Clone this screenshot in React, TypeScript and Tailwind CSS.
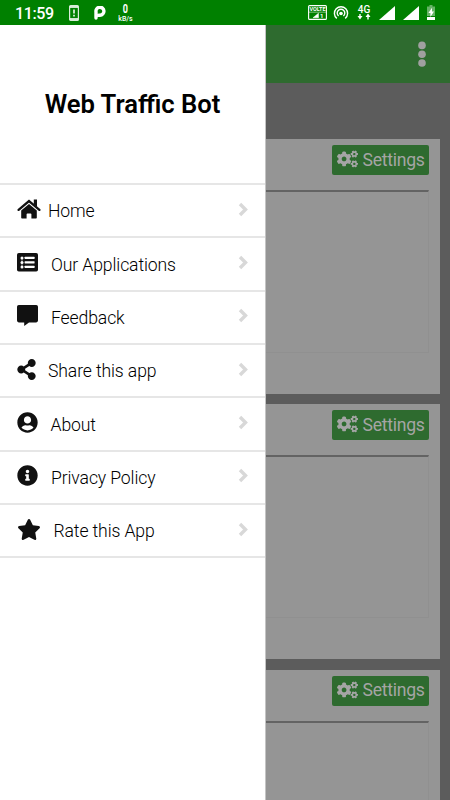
import React from 'react';
import { FaShareAlt, FaUserCircle, FaInfoCircle, FaStar, FaCogs } from 'react-icons/fa';

interface MenuItem {
  label: string;
  icon: React.ReactNode;
  gap: string;
}

const HomeIcon = () => (
  <svg width="24" height="21" viewBox="0 0 24 21" fill="currentColor">
    <path d="M1.6 10.9L12 2.1l10.4 8.8" fill="none" stroke="currentColor" strokeWidth="2.3" strokeLinecap="round" />
    <path d="M16.8 0.6h3.2v7.4l-3.2-2.5z" />
    <path d="M4.2 11.6L12 5.1l7.8 6.5v7.2a.8.8 0 0 1-.8.8h-4.6v-4.4a.8.8 0 0 0-.8-.8h-3.2a.8.8 0 0 0-.8.8v4.4H5a.8.8 0 0 1-.8-.8z" />
  </svg>
);

const ListIcon = () => (
  <svg width="21" height="21" viewBox="0 0 21 21">
    <rect x="0" y="1" width="21" height="18.6" rx="1.8" fill="currentColor" />
    <g fill="white">
      <circle cx="5" cy="5.9" r="1.5" />
      <circle cx="5" cy="10.4" r="1.5" />
      <circle cx="5" cy="14.9" r="1.5" />
      <rect x="7.6" y="4.8" width="10" height="2.2" rx="0.4" />
      <rect x="7.6" y="9.3" width="10" height="2.2" rx="0.4" />
      <rect x="7.6" y="13.8" width="10" height="2.2" rx="0.4" />
      <rect x="4.6" y="5" width="0.8" height="10" opacity="0.6" />
    </g>
  </svg>
);

const CommentIcon = () => (
  <svg width="21" height="21" viewBox="0 0 21 21" fill="currentColor">
    <path d="M1.8 0h17.4A1.8 1.8 0 0 1 21 1.8v13.8a1.8 1.8 0 0 1-1.8 1.8H12L7.2 21v-3.6H1.8A1.8 1.8 0 0 1 0 15.6V1.8A1.8 1.8 0 0 1 1.8 0z" />
  </svg>
);

const MENU: MenuItem[] = [
  { label: 'Home', icon: <HomeIcon />, gap: 'ml-[7px]' },
  { label: 'Our Applications', icon: <ListIcon />, gap: 'ml-[13px]' },
  { label: 'Feedback', icon: <CommentIcon />, gap: 'ml-[13px]' },
  { label: 'Share this app', icon: <FaShareAlt className="w-[19px] h-[21px]" />, gap: 'ml-[12px]' },
  { label: 'About', icon: <FaUserCircle className="w-[21px] h-[21px]" />, gap: 'ml-[12.5px]' },
  { label: 'Privacy Policy', icon: <FaInfoCircle className="w-[21px] h-[21px]" />, gap: 'ml-[13px]' },
  { label: 'Rate this App', icon: <FaStar className="w-[24px] h-[21px]" />, gap: 'ml-[12.5px]' },
];

const StatusBar = () => (
  <div className="h-[25px] shrink-0 bg-[#008000] text-white flex items-center pl-[15px] pr-[14px]">
    <span className="text-[16px] leading-none font-medium tracking-[-0.4px] mt-[3px] w-[54px]">11:59</span>

    {/* phone alert */}
    <svg width="10" height="16" viewBox="0 0 10 16" className="shrink-0">
      <rect x="0.6" y="0.6" width="8.8" height="14.8" rx="1" fill="none" stroke="white" strokeOpacity="0.85" strokeWidth="1.2" />
      <path d="M1 2h8M1 14h8" stroke="white" strokeWidth="2" opacity="0.8" />
      <path d="M5 4.5v4M5 9.8v1.7" stroke="white" strokeWidth="1.5" />
    </svg>

    {/* P app logo */}
    <svg width="12" height="14" viewBox="0 0 12 14" className="ml-[15px] mt-[1px] shrink-0">
      <path d="M2 12V6A4 4 0 1 1 6 9.2H4.7" fill="none" stroke="white" strokeWidth="3.4" strokeLinecap="round" />
    </svg>

    <div className="ml-[12px] w-[15px] flex flex-col items-center leading-none mt-[1px]">
      <span className="text-[12px] leading-[11px] font-bold scale-x-75">0</span>
      <span className="text-[7px] leading-[8px] font-medium">kB/s</span>
    </div>

    <div className="flex-1" />

    {/* volte box */}
    <svg width="19" height="15" viewBox="0 0 19 15" className="shrink-0">
      <rect x="0.6" y="0.6" width="17.8" height="13.8" rx="1" fill="none" stroke="white" strokeWidth="1.1" />
      <path d="M1 7.2h17M5 12.7l5.5-4.5v4.5z" stroke="white" strokeWidth="0.5" fill="white" />
      <text x="9.5" y="6" fontSize="5.5" fontWeight="700" textAnchor="middle" fill="white">VOLTE</text>
      <text x="12" y="13" fontSize="6" fontWeight="700" fill="white">1</text>
    </svg>

    {/* hotspot */}
    <svg width="16" height="15" viewBox="0 0 16 15" className="ml-[6px] shrink-0">
      <g fill="none" stroke="white" strokeWidth="1.4">
        <path d="M3.8 13.4A6.6 6.6 0 1 1 12.2 13.4" />
        <path d="M5.6 11A3.8 3.8 0 1 1 10.4 11" />
      </g>
      <circle cx="8" cy="8.5" r="1.8" fill="white" />
    </svg>

    {/* 4G with data arrows */}
    <svg width="14" height="15" viewBox="0 0 14 15" className="ml-[8px] shrink-0">
      <text x="7" y="7.5" fontSize="10" fontWeight="500" textAnchor="middle" fill="white">4G</text>
      <path d="M0.5 11h1.8V9h1.4v2H5.5L3 14.5zM8.5 12L11 8.5l2.5 3.5h-1.8v2.5h-1.4V12z" fill="white" />
    </svg>

    <svg width="16" height="14" viewBox="0 0 16 14" className="ml-[8px] shrink-0">
      <path d="M0 14L16 0v14z" fill="white" />
    </svg>
    <svg width="16" height="14" viewBox="0 0 16 14" className="ml-[8px] shrink-0">
      <path d="M0 14L16 0v14z" fill="white" />
    </svg>

    {/* charging battery */}
    <svg width="8" height="15" viewBox="0 0 8 15" className="ml-[8px] mr-px shrink-0">
      <path d="M0 1.5h2.5V0h3v1.5H8V11H0z" fill="white" opacity="0.4" />
      <path d="M0 12h8v3H0z" fill="white" />
      <path d="M5 2.8L1.4 8h2v4L7 6.6H5z" fill="white" />
    </svg>
  </div>
);

const Card = () => (
  <div className="h-[255px] shrink-0 bg-[#959595] mx-[10px] px-[11px] pt-[6px]">
    <div className="flex justify-end">
      <button className="w-[97px] h-[30px] bg-[#2e6b2f] text-[#a5a5a5] rounded-[2px] flex items-center pl-[5px]">
        <FaCogs className="w-[21px] h-[18px] -mt-[2px] shrink-0" />
        <span className="ml-[4.5px] mt-[1px] text-[17.6px] tracking-[-0.27px] leading-none">Settings</span>
      </button>
    </div>
    <div className="mt-[15px] h-[163px] border border-[#909090] border-t-2 border-t-[#636363]" />
  </div>
);

const Drawer = () => (
  <aside className="absolute left-0 top-[25px] bottom-0 w-[266px] bg-white border-r border-[#c4c4c4]">
    <div className="h-[158px] flex items-center justify-center">
      <h1 className="mt-[2px] text-[25.6px] leading-none font-semibold text-black">Web Traffic Bot</h1>
    </div>
    <ul className="border-t-2 border-[#e6e6e6]">
      {MENU.map(item => (
        <li key={item.label} className="h-[53.33px] border-b-2 border-[#e6e6e6] pl-[17px] pr-[17px] flex items-center text-[#111]">
          <span className="shrink-0 -mt-[3px]">{item.icon}</span>
          <span className={`${item.gap} mt-[3px] text-[17.6px] tracking-[-0.12px] leading-none font-light text-black`}>{item.label}</span>
          <svg width="10" height="15" viewBox="0 0 10 15" className="ml-auto -mt-[3px] text-[#d8d8d8]">
            <path d="M2 2l5.5 5.5L2 13" fill="none" stroke="currentColor" strokeWidth="3.4" />
          </svg>
        </li>
      ))}
    </ul>
  </aside>
);

export default function App() {
  return (
    <div className="relative w-[450px] h-[800px] overflow-hidden bg-[#5c5c5c] flex flex-col font-[Roboto,sans-serif]">
      <StatusBar />
      <header className="h-[58px] shrink-0 bg-[#2e6b2f] flex items-center justify-end pr-[24px]">
        <svg width="8" height="26" viewBox="0 0 8 26" fill="#a0a0a0">
          <circle cx="4" cy="4.4" r="3.8" />
          <circle cx="4" cy="13.2" r="3.8" />
          <circle cx="4" cy="22" r="3.8" />
        </svg>
      </header>
      <main className="flex flex-col gap-[10.4px] pt-[56px]">
        <Card />
        <Card />
        <Card />
      </main>
      <Drawer />
    </div>
  );
}
